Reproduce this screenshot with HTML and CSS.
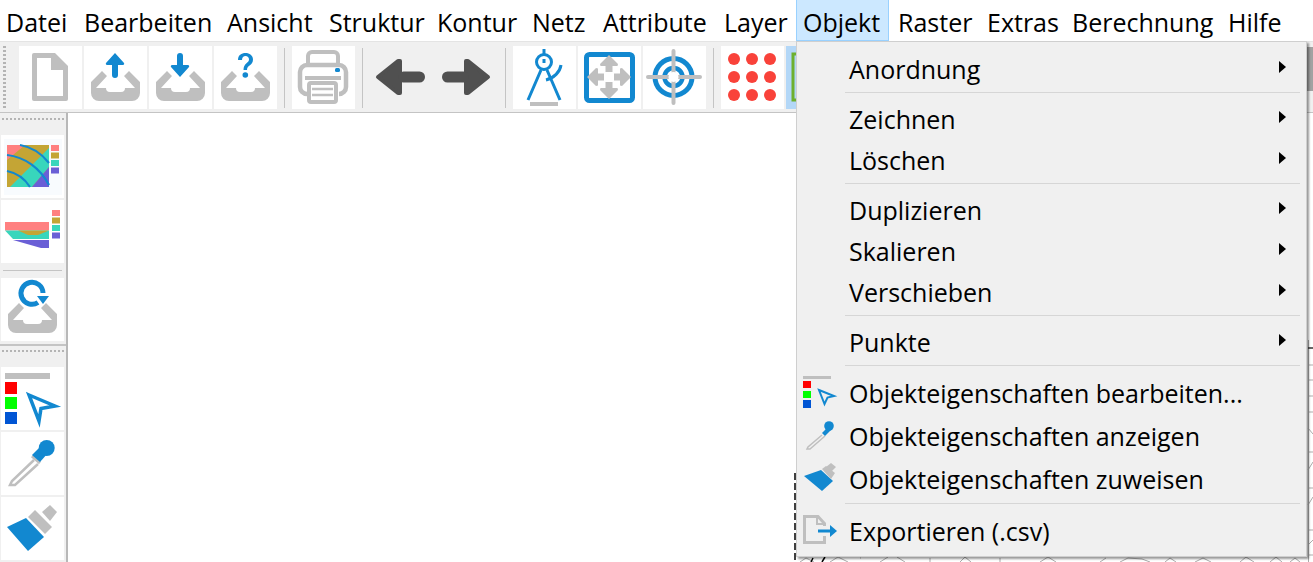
FILE: index.html
```html
<!DOCTYPE html>
<html lang="de">
<head>
<meta charset="utf-8">
<title>Objekt-Menü</title>
<link rel="stylesheet" href="styles.css">
</head>
<body>
<div class="app">
  <nav class="menubar">
    <span class="mi w-datei">Datei</span>
    <span class="mi w-bearb">Bearbeiten</span>
    <span class="mi w-ansicht">Ansicht</span>
    <span class="mi w-struktur">Struktur</span>
    <span class="mi w-kontur">Kontur</span>
    <span class="mi w-netz">Netz</span>
    <span class="mi w-attr">Attribute</span>
    <span class="mi w-layer">Layer</span>
    <span class="mi w-objekt active">Objekt</span>
    <span class="mi w-raster">Raster</span>
    <span class="mi w-extras">Extras</span>
    <span class="mi w-ber">Berechnung</span>
    <span class="mi w-hilfe">Hilfe</span>
  </nav>

  <div class="toolbar">
    <div class="grip-v"></div>
    <div class="tb"><svg viewBox="0 0 63 63"><path d="M15 7h21l13 13v33a2 2 0 0 1-2 2H15a2 2 0 0 1-2-2V9a2 2 0 0 1 2-2z" fill="#bfbfbf"/><path d="M18 12h14v12h12v26H18z" fill="#fff"/></svg></div>
    <div class="tb"><svg viewBox="0 0 63 63"><use href="#tray"/><path d="M31 7 40 17a1.300 1.300 0 0 1-1 2h-5v10a3 3 0 0 1-6 0V19h-5a1.300 1.300 0 0 1-1-2z" fill="#1288d0"/></svg></div>
    <div class="tb"><svg viewBox="0 0 63 63"><use href="#tray"/><path d="M31 31 40 21a1.300 1.300 0 0 0-1-2h-5V10a3 3 0 0 0-6 0v9h-5a1.300 1.300 0 0 0-1 2z" fill="#1288d0"/></svg></div>
    <div class="tb"><svg viewBox="0 0 63 63"><use href="#tray"/><path d="M24 14c0-5 3.500-7 7.500-7s7.500 2.500 7.500 6.500c0 6-6 5.500-6 10.500h-3.500c0-7 5.500-7 5.500-10.500 0-2-1.500-3.500-3.500-3.500s-3.500 1.500-3.500 4z" fill="#1288d0"/><circle cx="31.300" cy="29" r="2.800" fill="#1288d0"/></svg></div>
    <div class="sep-v"></div>
    <div class="tb"><svg viewBox="0 0 63 63"><path d="M16 20V10a4 4 0 0 1 4-4h22a4 4 0 0 1 4 4v10" fill="none" stroke="#bfbfbf" stroke-width="4"/><rect x="8" y="19" width="46" height="29" rx="7" fill="none" stroke="#bfbfbf" stroke-width="4.500"/><rect x="13" y="30" width="36" height="4" fill="#bfbfbf"/><rect x="15" y="34" width="32" height="24" fill="#fff"/><rect x="17" y="37" width="27" height="19" rx="2" fill="none" stroke="#bfbfbf" stroke-width="4"/><path d="M20 43h21M20 49h21" stroke="#bfbfbf" stroke-width="2.500"/><rect x="43" y="22" width="5" height="4" rx="1.500" fill="#1288d0"/></svg></div>
    <div class="sep-v"></div>
    <div class="tb plain"><svg viewBox="0 0 63 63"><path d="M8 31 28 15h2v32h-2z" fill="#505050" stroke="#505050" stroke-linejoin="round" stroke-width="4"/><rect x="28" y="25.500" width="27" height="11" rx="5.500" fill="#505050"/></svg></div>
    <div class="tb plain"><svg viewBox="0 0 63 63"><path d="M53 31 33 15h-2v32h2z" fill="#505050" stroke="#505050" stroke-linejoin="round" stroke-width="4"/><rect x="7" y="25.500" width="27" height="11" rx="5.500" fill="#505050"/></svg></div>
    <div class="sep-v"></div>
    <div class="tb"><svg viewBox="0 0 63 63" fill="none" stroke="#1288d0" stroke-width="3"><path d="M31 3v5"/><circle cx="31" cy="16" r="7.500"/><path d="M28 24 15 54M34 24 47 54M31 13v4"/><path d="M33 34c8-2 14-8 15-15"/><path d="M17 58h28" stroke="#bfbfbf" stroke-width="4"/></svg></div>
    <div class="tb"><svg viewBox="0 0 63 63"><rect x="8.500" y="8.500" width="46" height="46" rx="3" fill="none" stroke="#1288d0" stroke-width="5"/><g fill="#bfbfbf"><path d="M31 9l9 9-.5 2h-5v6h-7v-6h-5l-.5-2zM31 53l9-9-.5-2h-5v-6h-7v6h-5l-.5 2zM9 31l9-9 2 .5v5h6v7h-6v5l-2 .5zM53 31l-9-9-2 .5v5h-6v7h6v5l2 .5z"/></g></svg></div>
    <div class="tb"><svg viewBox="0 0 63 63"><circle cx="30.500" cy="31" r="18.500" fill="none" stroke="#1288d0" stroke-width="5"/><circle cx="30.500" cy="31" r="9" fill="none" stroke="#1288d0" stroke-width="4.500"/><path d="M30.500 5v52M5 31h52" stroke="#bfbfbf" stroke-width="4" stroke-linecap="round"/><circle cx="30.500" cy="31" r="5" fill="#fff"/></svg></div>
    <div class="sep-v"></div>
    <div class="tb"><svg viewBox="0 0 63 63" fill="#f9423a"><circle cx="13" cy="13" r="6"/><circle cx="31" cy="13" r="6"/><circle cx="49" cy="13" r="6"/><circle cx="13" cy="31" r="6"/><circle cx="31" cy="31" r="6"/><circle cx="49" cy="31" r="6"/><circle cx="13" cy="49" r="6"/><circle cx="31" cy="49" r="6"/><circle cx="49" cy="49" r="6"/></svg></div>
    <div class="tb selected"><svg viewBox="0 0 63 63"><rect x="7" y="8" width="50" height="46" fill="none" stroke="#6eb02e" stroke-width="3"/></svg></div>
    <div class="edge-block"></div>
  </div>

  <div class="main">
    <aside class="sidebar">
      <div class="side-group">
        <div class="grip-h"></div>
        <div class="sb"><svg viewBox="0 0 63 63"><rect x="3" y="4" width="58" height="56" fill="#f8fbfe"/><path d="M6 10h42v42H6z" fill="#c4a535"/><path d="M6 10h18L6 25z" fill="#ff8080"/><path d="M9 52h22l17-20V13z" fill="#38d6bc"/><path d="M31 52 48 32v20z" fill="#6a5fd6"/><path d="M19 10c12 2 22 9 29 18M6 20c18 2 33 13 42 30M6 36c10 2 18 8 23 16" fill="none" stroke="#1288d0" stroke-width="2.200"/><rect x="50" y="10" width="8" height="6" fill="#ff8080"/><rect x="50" y="17.500" width="8" height="6" fill="#c4a535"/><rect x="50" y="25" width="8" height="6" fill="#38d6bc"/><rect x="50" y="32.500" width="8" height="6" fill="#6a5fd6"/></svg></div>
        <div class="sb"><svg viewBox="0 0 63 63"><path d="M4 22h44v8.500H4z" fill="#ff8080"/><path d="M4 30.500h44v8.500H12z" fill="#38d6bc"/><path d="M17 30.500h31l-11 4.500H27z" fill="#c4a535"/><path d="M12 40h36v8h-8z" fill="#6a5fd6"/><rect x="51" y="10" width="8" height="6" fill="#ff8080"/><rect x="51" y="17.500" width="8" height="6" fill="#c4a535"/><rect x="51" y="25" width="8" height="6" fill="#38d6bc"/><rect x="51" y="32.500" width="8" height="6" fill="#6a5fd6"/></svg></div>
        <div class="sep-h"></div>
        <div class="sb"><svg viewBox="0 0 63 63"><use href="#tray"/><path d="M37 24.500A11 11 0 1 1 42 15" fill="none" stroke="#1288d0" stroke-width="5"/><path d="M36 18h12l-6 8z" fill="#1288d0"/></svg></div>
      </div>
      <div class="side-group second">
        <div class="grip-h"></div>
        <div class="sb"><svg viewBox="0 0 63 63"><rect x="4" y="6" width="45" height="6" fill="#bfbfbf"/><rect x="4" y="15" width="12" height="12" fill="#f00"/><rect x="4" y="30" width="12" height="12" fill="#0f0"/><rect x="4" y="45" width="12" height="12" fill="#0055d4"/><path d="M28 28 54 39 40 41.500 38 54z" fill="none" stroke="#1288d0" stroke-width="3.500"/></svg></div>
        <div class="sb"><svg viewBox="0 0 63 63"><path d="M33 28 11 49l-2 4 5 0 23-21" fill="none" stroke="#bfbfbf" stroke-width="2.500"/><path d="M31 24l8 7" stroke="#bfbfbf" stroke-width="3"/><path d="M31 23l8 7 8-9-7-7z" fill="#1288d0"/><circle cx="45.700" cy="16" r="8" fill="#1288d0"/></svg></div>
        <div class="sb"><svg viewBox="0 0 63 63"><path d="M6 30 25 21 43 40 27 54z" fill="#1288d0"/><path d="M27 20l7-7 17 17-7 7z" fill="#bfbfbf"/><path d="M41 15l8-7 7 7-7 9z" fill="#bfbfbf"/></svg></div>
      </div>
    </aside>
    <div class="canvas">
      <svg class="mesh" viewBox="68 113 1245 449" fill="none" stroke="#ababab" stroke-width="1">
        <path d="M800 562l6-4 8 4M830 562l8-5 10 5M860 558h1M880 562l8-5M905 562l-8-5M930 558v4M960 562l5-5 6 5M1000 558v4M1040 562l8-5 8 5M1100 562l6-4M1120 562l8-4 14 1 8 3M1165 562l5-4 6 4M1195 562l8-4 8 4M1240 562l6-5 8 5M1270 562l6-5 6 5M1290 562l5-4 5 4"/>
        <path d="M1308.500 340V562M1308 365h5M1308 380h5M1308 396h5M1308 412h5M1308 428l5 6M1308 452h5M1308 470l5-8M1308 488h5M1308 505l5-8M1308 530h5M1308 545l5-5M1308 555h5"/>
        <path d="M795 473V562" stroke="#000" stroke-width="1.500" stroke-dasharray="7 3"/>
        <path d="M1308 348h5" stroke="#333" stroke-width="1.500"/>
        <path d="M811 562l2-4M822 562l3-5" stroke="#000" stroke-width="1.500"/>
      </svg>
    </div>
  </div>

  <div class="popup">
    <div class="row"><span>Anordnung</span><i class="arrow"></i></div>
    <hr>
    <div class="row"><span>Zeichnen</span><i class="arrow"></i></div>
    <div class="row"><span>Löschen</span><i class="arrow"></i></div>
    <hr>
    <div class="row"><span>Duplizieren</span><i class="arrow"></i></div>
    <div class="row"><span>Skalieren</span><i class="arrow"></i></div>
    <div class="row"><span>Verschieben</span><i class="arrow"></i></div>
    <hr>
    <div class="row"><span>Punkte</span><i class="arrow"></i></div>
    <hr>
    <div class="row tall"><svg class="ico" viewBox="0 0 32 32"><rect x="0" y="-1" width="28" height="3" fill="#bfbfbf"/><rect x="0" y="4" width="8" height="7" fill="#f00"/><rect x="0" y="14" width="8" height="7" fill="#0f0"/><rect x="0" y="23" width="8" height="8" fill="#0055d4"/><path d="M16 13 31 19 24.500 20.500 21.500 27z" fill="none" stroke="#1288d0" stroke-width="2"/></svg><span>Objekteigenschaften bearbeiten...</span></div>
    <div class="row tall"><svg class="ico" viewBox="0 0 32 32"><path d="M19 15 5 27l-1 2 3 0 15-13" fill="none" stroke="#bfbfbf" stroke-width="1.500"/><path d="M19 13l3 3 6-6-3-3z" fill="#1288d0"/><circle cx="26" cy="6" r="4.800" fill="#1288d0"/></svg><span>Objekteigenschaften anzeigen</span></div>
    <div class="row tall"><svg class="ico" viewBox="0 0 32 32"><path d="M1 13 18 7 30 18 19 28z" fill="#1288d0"/><path d="M19 6l4-3 9 7-4 6z" fill="#bfbfbf"/><path d="M23 4l5-4 5 4-5 5z" fill="#bfbfbf"/></svg><span>Objekteigenschaften zuweisen</span></div>
    <hr>
    <div class="row tall"><svg class="ico" viewBox="0 0 32 32"><path d="M21.500 11V8.500L15 1.500H1.500v26h20V21" fill="none" stroke="#bfbfbf" stroke-width="3"/><path d="M14 2v7h7" fill="none" stroke="#bfbfbf" stroke-width="2"/><path d="M15 16h13" stroke="#1288d0" stroke-width="3"/><path d="M27 10l7 6-7 6z" fill="#1288d0"/></svg><span>Exportieren (.csv)</span></div>
  </div>
</div>

<svg class="defs" width="0" height="0"><defs>
  <path id="tray" d="M18 25 7 36v11a8 8 0 0 0 8 8h33a8 8 0 0 0 8-8V36L45 25l-5 5 11 12H41a4 4 0 0 1-4 4H26a4 4 0 0 1-4-4H12l11-12z" fill="#bfbfbf"/>
</defs></svg>
</body>
</html>
```
FILE: styles.css
```css
* { box-sizing: border-box; }
html, body { margin: 0; padding: 0; background: #fff; overflow: hidden; }
body { width: 1313px; height: 562px; font-family: "Open Sans", "Noto Sans", sans-serif; color: #000; }
.defs { position: absolute; }
.app { position: relative; width: 1313px; height: 562px; overflow: hidden; display: flex; flex-direction: column; }

.menubar { height: 41px; display: flex; background: #fff; font-size: 25px; flex: none; }
.mi { display: block; height: 41px; line-height: 45px; white-space: nowrap; padding-left: 6px; }
.w-datei { width: 78px; }
.w-bearb { width: 143px; }
.w-ansicht { width: 102px; }
.w-struktur { width: 108px; }
.w-kontur { width: 95px; }
.w-netz { width: 71px; }
.w-attr { width: 121px; }
.w-layer { width: 78px; }
.w-objekt { width: 93px; padding-left: 6px; }
.w-raster { width: 89px; padding-left: 9px; }
.w-extras { width: 85px; padding-left: 9px; }
.w-ber { width: 156px; padding-left: 9px; }
.w-hilfe { width: 84px; padding-left: 9px; }
.active { background: #cce8ff; border: 1px solid #99d1ff; border-width: 0 1px 1px 1px; }

.toolbar { height: 72px; flex: none; background: #f0f0f0; border-top: 1px solid #e4e4e4; border-bottom: 1px solid #c4c4c4; display: flex; align-items: flex-start; padding: 4px 0 0 3px; position: relative; }
.grip-v { width: 3px; height: 63px; margin-right: 13px; background: repeating-linear-gradient(to bottom, #b4b4b4 0 2px, transparent 2px 4px); }
.tb { width: 63px; height: 63px; background: #fff; margin-right: 2px; flex: none; }
.tb svg, .sb svg { display: block; width: 63px; height: 63px; }
.tb.plain { background: transparent; }
.tb.selected { background: #b3d7f7; }
.sep-v { width: 1px; height: 60px; background: #c4c4c4; margin: 2px 7px 0 5px; flex: none; }
.edge-block { position: absolute; right: 0; top: 5px; width: 6px; height: 44px; background: #a2a2a2; }

.main { flex: 1; display: flex; min-height: 0; }
.sidebar { width: 68px; flex: none; background: #f0f0f0; border-right: 2px solid #b8b8b8; display: flex; flex-direction: column; }
.side-group { padding: 0 0 0 1px; height: 231px; flex: none; display: flex; flex-direction: column; gap: 2px; }
.side-group.second { border-top: 2px solid #c4c4c4; height: 218px; }
.grip-h { height: 2px; width: 62px; margin: 5px 0 13px 1px; background: repeating-linear-gradient(to right, #b4b4b4 0 2px, transparent 2px 4px); }
.second .grip-h { margin-top: 4px; }
.sb { width: 63px; height: 63px; background: #fff; flex: none; }
.sep-h { height: 1px; width: 59px; margin: 5px 0 5px 2px; background: #c4c4c4; }
.canvas { flex: 1; background: #fff; position: relative; }
.mesh { position: absolute; left: 0; top: 0; width: 1245px; height: 449px; }

.popup { position: absolute; left: 796px; top: 41px; width: 511px; height: 516px; background: #f0f0f0; border: 1px solid #cfcfcf; box-shadow: 2px 2px 2px rgba(0,0,0,.4); font-size: 25px; padding-top: 7px; }
.row { height: 41px; line-height: 41px; position: relative; padding-left: 52px; white-space: nowrap; }
.row.tall { height: 43px; line-height: 43px; }
.ico { position: absolute; left: 6px; top: 5px; width: 32px; height: 32px; overflow: visible; }
.arrow { position: absolute; right: 20px; top: 12px; width: 0; height: 0; border-left: 7px solid #000; border-top: 6.5px solid transparent; border-bottom: 6.5px solid transparent; }
.popup hr { border: 0; height: 1px; background: #d6d6d6; margin: 2px 6px 6px 48px; }
```
